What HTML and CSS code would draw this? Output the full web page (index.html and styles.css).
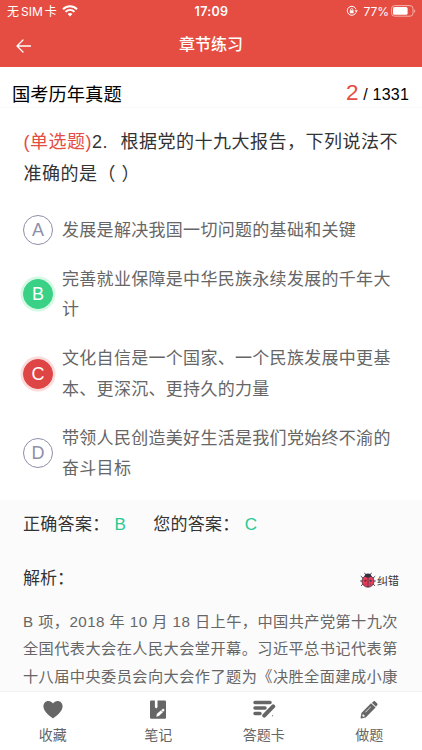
FILE: index.html
```html
<!DOCTYPE html>
<html lang="zh-CN">
<head>
    <meta charset="UTF-8">
    <meta name="viewport" content="width=device-width, initial-scale=1.0">
    <title>章节练习</title>
    <link rel="stylesheet" href="styles.css">
</head>
<body>
    <header class="header">
        <div class="status">
            <div class="status-left">
                <span class="carrier">无<span class="sim">SIM</span>卡</span>
                <svg class="wifi" width="16" height="12" viewBox="0 0 16 12" fill="none" stroke="#fff" stroke-width="2">
                    <path d="M1 4.2C5 .3 11 .3 15 4.2M3.5 6.9c2.6-2.5 6.4-2.5 9 0"/>
                    <path d="M5.6 9c1.4-1.3 3.4-1.3 4.8 0L8 11.5z" fill="#fff" stroke="none"/>
                </svg>
            </div>
            <span class="time">17:09</span>
            <div class="status-right">
                <svg width="12" height="12" viewBox="0 0 12 12" fill="none" stroke="#fff" stroke-width="1">
                    <path d="M9.9 7.6A4.5 4.5 0 1 1 10 4.2"/>
                    <path d="M8.6 5.3h3.2L10.2 7.4z" fill="#fff" stroke="none"/>
                    <path d="M4.6 5.5V4.6a1.1 1.1 0 0 1 2.2 0v.9" stroke-width=".8"/>
                    <rect x="3.8" y="5.3" width="3.8" height="3" rx=".4" fill="#fff" stroke="none"/>
                </svg>
                <span class="percent">77%</span>
                <svg width="25" height="12" viewBox="0 0 25 12">
                    <rect x=".6" y=".6" width="21.4" height="10.6" rx="3" fill="none" stroke="#f6b0aa"/>
                    <rect x="2" y="2" width="14.6" height="7.8" rx="1.6" fill="#fff"/>
                    <path d="M23.2 4.2c1.4.5 1.4 3.1 0 3.6z" fill="#f6b0aa"/>
                </svg>
            </div>
        </div>
        <div class="titlebar">
            <svg class="back" width="16" height="14" viewBox="0 0 16 14" fill="none" stroke="#fff" stroke-width="1.3" stroke-linecap="round" stroke-linejoin="round">
                <path d="M7 1L1 7l6 6M1 7h13.5"/>
            </svg>
            <h1>章节练习</h1>
        </div>
    </header>

    <div class="paper">
        <span class="paper-name">国考历年真题</span>
        <span class="paper-count"><span class="current">2</span> / 1331</span>
    </div>

    <main class="content">
        <p class="question"><span class="type">(单选题)</span>2.<span class="gap"></span>根据党的十九大报告，下列说法不<br>准确的是（ ）</p>

        <ul class="options">
            <li>
                <span class="mark">A</span>
                <span class="text">发展是解决我国一切问题的基础和关键</span>
            </li>
            <li>
                <span class="mark right">B</span>
                <span class="text">完善就业保障是中华民族永续发展的千年大<br>计</span>
            </li>
            <li>
                <span class="mark wrong">C</span>
                <span class="text">文化自信是一个国家、一个民族发展中更基<br>本、更深沉、更持久的力量</span>
            </li>
            <li>
                <span class="mark">D</span>
                <span class="text">带领人民创造美好生活是我们党始终不渝的<br>奋斗目标</span>
            </li>
        </ul>
    </main>

    <section class="analysis">
        <div class="answers">
            <span>正确答案：</span><span class="letter">B</span>
            <span class="yours">您的答案：</span><span class="letter">C</span>
        </div>
        <div class="analysis-head">
            <span>解析：</span>
            <span class="report">
                <svg width="16" height="16" viewBox="0 0 16 16">
                    <path d="M5.6 2.8L4.6.8M10.4 2.8l1-2M3 6L.8 4.2M13 6l2.2-1.8M2 9H.2M14 9h1.8M3 12L1 13.8M13 12l2 1.8" fill="none" stroke="#3b3444" stroke-width=".9"/>
                    <circle cx="8" cy="9.2" r="6" fill="#e83e5c" stroke="#3b3444" stroke-width=".8"/>
                    <path d="M4.4 4.6C4.8 2.4 6 1.5 8 1.5s3.2.9 3.6 3.1C9.5 6 6.5 6 4.4 4.6z" fill="#35303f"/>
                    <path d="M8 5v10" stroke="#3b3444" stroke-width=".8"/>
                    <g fill="#3b3444">
                        <circle cx="5.4" cy="8.7" r="1"/>
                        <circle cx="10.6" cy="8.7" r="1"/>
                        <circle cx="5.7" cy="12" r=".5"/>
                        <circle cx="10.3" cy="12" r=".5"/>
                    </g>
                </svg>纠错
            </span>
        </div>
        <p class="explain">B 项，2018 年 10 月 18 日上午，中国共产党第十九次<br>全国代表大会在人民大会堂开幕。习近平总书记代表第<br>十八届中央委员会向大会作了题为《决胜全面建成小康</p>
    </section>

    <nav class="tabbar">
        <a class="tab">
            <svg width="20" height="20" viewBox="0 0 20 20" fill="#666">
                <path d="M10 18.6C7.5 16.4.4 12 .4 6.3.4 3.2 2.7 1 5.3 1 7.3 1 9 2 10 3.5 11 2 12.7 1 14.7 1c2.6 0 4.9 2.2 4.9 5.3 0 5.7-7.1 10.1-9.6 12.3z"/>
            </svg>
            收藏
        </a>
        <a class="tab">
            <svg width="20" height="20" viewBox="0 0 20 20">
                <rect x="2" y=".4" width="16" height="18.4" rx="1.2" fill="#666"/>
                <path d="M6.9 0h2.6v7.3L8.2 8.6 6.9 7.3z" fill="#fff"/>
                <path d="M8.3 16.8l.6-3 4.2-3.6 2.2-1.8 1.3 1.7-1.8 2.1-3.9 3.9z" fill="#fff"/>
                <path d="M13 10.2l1.7 1.9" stroke="#666" stroke-width=".7"/>
            </svg>
            笔记
        </a>
        <a class="tab">
            <svg width="24" height="20" viewBox="0 0 24 20" fill="none" stroke="#666" stroke-width="3.5" stroke-linecap="round">
                <path d="M3 2.4h15M3 7.9h10M3 13.4h5"/>
                <path d="M12.2 15.6L21.2 6.4" stroke-width="4"/>
                <path d="M19.6 16.2l1.4-1.4v1.4z" fill="#666" stroke="none"/>
            </svg>
            答题卡
        </a>
        <a class="tab">
            <svg width="20" height="20" viewBox="0 0 20 20" fill="#666">
                <path d="M12.8 2.7l1.7-1.3c.6-.5 1.2-.5 1.7 0l2 2c.5.5.5 1.2 0 1.7L17 6.7z"/>
                <path fill-rule="evenodd" d="M12 3.200l4.600 4.400L6.700 17.500l-4.500.9c-.4.100-.7-.2-.6-.6l.8-4.900zM3.600 14.500l-.3 1.500.8.800 1.600-.4.100-1-1.100-.1-.100-1zM11.800 6.400l-5.600 5.600.4.400 5.600-5.600z"/>
            </svg>
            做题
        </a>
    </nav>
</body>
</html>
```

FILE: styles.css
```css
* {
    box-sizing: border-box;
}
body {
    display: flex;
    flex-direction: column;
    height: 750px;
    margin: 0;
    overflow: hidden;
    background: #fff;
    color: #333;
    font-family: "Liberation Sans", "Noto Sans CJK SC", sans-serif;
    white-space: nowrap;
}
svg {
    display: block;
    flex: none;
}
.header {
    flex: none;
    height: 67px;
    background: #e54d42;
    color: #fff;
}
.status {
    display: grid;
    grid-template-columns: 1fr auto 1fr;
    align-items: center;
    height: 22px;
    padding: 0 6px 0 7px;
    font-size: 12px;
}
.status-left, .status-right {
    display: flex;
    align-items: center;
}
.carrier {
    margin-top: -2px;
}
.status-right {
    justify-content: flex-end;
}
.sim {
    margin: 0 2px;
    font-family: Inter, sans-serif;
}
.wifi {
    margin: 0 0 1px 5px;
}
.time {
    font: 600 12.5px Inter, sans-serif;
    letter-spacing: 0.3px;
}
.percent {
    margin: 0 2px 0 5px;
    font: 12px Inter, sans-serif;
}
.titlebar {
    display: grid;
    grid-template-columns: 1fr auto 1fr;
    align-items: center;
    height: 45px;
    padding: 0 16px;
}
.titlebar h1 {
    margin: 0;
    font-size: 16px;
    font-weight: 500;
    line-height: 45px;
}
.back {
    margin-top: 3px;
}
.paper {
    display: flex;
    flex: none;
    align-items: center;
    justify-content: space-between;
    height: 41px;
    padding: 13px 13px 0 12px;
    border-bottom: 1px solid #f8f8f8;
    color: #000;
}
.paper-name {
    padding-top: 2px;
    font-size: 18.3px;
    line-height: 28px;
}
.paper-count {
    font-size: 16px;
    line-height: 28px;
    letter-spacing: 0.2px;
}
.current {
    color: #e54d42;
    font-size: 22.5px;
}
.content {
    flex: none;
    height: 392px;
    padding: 18px 23px 0;
}
.question {
    margin: 0;
    padding-left: 0.5px;
    font-size: 18px;
    line-height: 32px;
    letter-spacing: 0.5px;
}
.type {
    color: #e54d42;
}
.gap {
    display: inline-block;
    width: 12.5px;
}
.options {
    display: grid;
    gap: 16.5px;
    margin: 24px 0 0;
    padding: 0;
    list-style: none;
    color: #666;
    font-size: 17px;
    line-height: 30.4px;
    letter-spacing: 0.3px;
}
.options li {
    display: flex;
    align-items: center;
    gap: 9px;
}
.text {
    padding-top: 2px;
}
.mark {
    flex: none;
    width: 30px;
    height: 30px;
    border: 1px solid #8e8fa8;
    border-radius: 50%;
    color: #8e8fa8;
    font-size: 18px;
    line-height: 28px;
    letter-spacing: 0;
    text-align: center;
}
.right {
    border-color: #39d185;
    background: #39d185;
    box-shadow: 0 0 0 2.5px #d4f8e4;
    color: #fff;
}
.wrong {
    border-color: #de4545;
    background: #de4545;
    box-shadow: 0 0 0 2.5px #fbdada;
    color: #fff;
}
.analysis {
    flex: 1;
    min-height: 0;
    padding: 9px 23px 0;
    overflow: hidden;
    background: #fbfbfb;
}
.answers {
    display: flex;
    font-size: 17px;
    line-height: 32px;
    letter-spacing: 0.3px;
}
.letter {
    margin-left: 5px;
    color: #27c994;
    font-size: 17px;
}
.yours {
    margin-left: 27px;
}
.analysis-head {
    display: flex;
    align-items: center;
    justify-content: space-between;
    height: 32px;
    margin-top: 19px;
    font-size: 17px;
}
.report {
    display: flex;
    align-items: center;
    gap: 1px;
    margin-top: 7px;
    font-size: 11px;
}
.explain {
    margin: 16px 0 0;
    color: #666;
    font-size: 15.2px;
    line-height: 27.3px;
    letter-spacing: 0.43px;
}
.tabbar {
    display: grid;
    flex: none;
    grid-template-columns: repeat(4, 1fr);
    height: 59px;
    border-top: 1px solid #f3f3f3;
    background: #fff;
}
.tab {
    display: flex;
    flex-direction: column;
    align-items: center;
    padding-top: 8px;
    color: #666;
    font-size: 14px;
    line-height: 30px;
}
```
